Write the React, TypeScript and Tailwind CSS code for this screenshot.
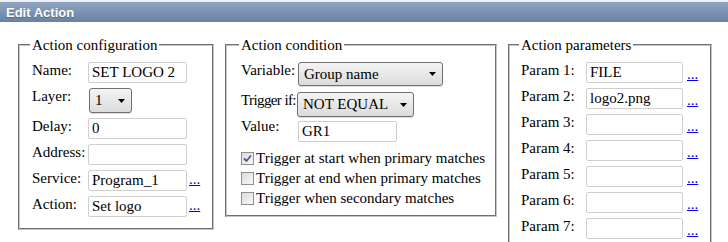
import type { ReactNode } from "react";

/* ── Small form pieces ── */
const TextBox = ({ value = "", width }: { value?: string; width: string }) => (
  <div
    className={`${width} h-[21px] shrink-0 rounded-[2px] border border-[#cfcfcf] bg-white pl-[3px] leading-[19px] whitespace-nowrap overflow-hidden`}
  >
    {value}
  </div>
);

const DropDown = ({ value, width, height }: { value: string; width: string; height: string }) => (
  <div
    className={`${width} ${height} shrink-0 flex items-center justify-between rounded-[3px] border border-[#707070] bg-gradient-to-b from-[#f4f4f4] to-[#dcdcdc] pl-[5px] pr-[6px] shadow-[0_1px_1px_rgba(0,0,0,0.15)]`}
  >
    <span className="whitespace-nowrap">{value}</span>
    <svg width="7" height="4" viewBox="0 0 7 4" className="shrink-0">
      <path d="M0 0 H7 L3.5 4 Z" fill="#000" />
    </svg>
  </div>
);

const Dots = ({ offset }: { offset: string }) => (
  <a className={`${offset} leading-[16px] text-[#0000ee] underline`}>...</a>
);

const Check = ({ checked, label }: { checked?: boolean; label: string }) => (
  <div className="flex items-center h-[20px] leading-[20px]">
    <span className="w-[13px] h-[13px] shrink-0 border border-[#8e8f8f] bg-gradient-to-br from-[#dcdcdc] to-[#f8f8f8] flex items-center justify-center">
      {checked && (
        <svg width="11" height="11" viewBox="0 0 11 11">
          <path d="M2 5.5 L4.5 8 L9 2.5" fill="none" stroke="#4b5a8c" strokeWidth="1.8" />
        </svg>
      )}
    </span>
    <span className="ml-[2px] whitespace-nowrap">{label}</span>
  </div>
);

const Group = ({
  title,
  width,
  pad,
  extra = "",
  children,
}: {
  title: string;
  width: string;
  pad: string;
  extra?: string;
  children: ReactNode;
}) => (
  <fieldset
    className={`${width} ${pad} ${extra} shrink-0 border-2 [--tw-border-style:groove] [border-style:groove] border-[#c4c4c4] pt-[9px]`}
  >
    <legend className="px-[2px] -ml-[2px] leading-[16px]">{title}</legend>
    {children}
  </fieldset>
);

const params = ["FILE", "logo2.png", "", "", "", "", ""];

export default function App() {
  return (
    <div className="w-[728px] h-[242px] overflow-hidden bg-white">
      {/* ── Title bar ── */}
      <div className="h-[22px] border-t-2 border-[#eef1f5] bg-gradient-to-b from-[#8fa4c0] to-[#6882a4] pl-[6px] pt-[3px] font-['Liberation_Sans',Arial,sans-serif] text-[13px] leading-[15px] font-bold text-white [text-shadow:0_1px_1px_rgba(0,0,0,0.25)]">
        Edit Action
      </div>

      <div className="flex items-start pl-[18px] mt-[15px] font-['Liberation_Serif','Times_New_Roman',serif] text-[15px] text-black">
        {/* ── Action configuration ── */}
        <Group title="Action configuration" width="w-[196px]" pad="pl-[12px] pb-[11px]">
          <div className="flex flex-col gap-[5px]">
            <div className="flex items-start">
              <span className="w-[56px] leading-[16px]">Name:</span>
              <TextBox value="SET LOGO 2" width="w-[99px]" />
            </div>
            <div className="flex items-start">
              <span className="w-[57px] leading-[16px]">Layer:</span>
              <DropDown value="1" width="w-[43px]" height="h-[25px]" />
            </div>
            <div className="flex items-start">
              <span className="w-[56px] leading-[16px]">Delay:</span>
              <TextBox value="0" width="w-[99px]" />
            </div>
            <div className="flex items-start">
              <span className="w-[56px] leading-[16px] whitespace-nowrap">Address:</span>
              <TextBox width="w-[99px]" />
            </div>
            <div className="flex items-start">
              <span className="w-[56px] leading-[16px]">Service:</span>
              <TextBox value="Program_1" width="w-[99px]" />
              <Dots offset="ml-[2px] mt-[1px]" />
            </div>
            <div className="flex items-start">
              <span className="w-[56px] leading-[16px]">Action:</span>
              <TextBox value="Set logo" width="w-[99px]" />
              <Dots offset="ml-[2px] mt-[1px]" />
            </div>
          </div>
        </Group>

        {/* ── Action condition ── */}
        <Group title="Action condition" width="w-[272px]" pad="pl-[14px] pb-[7px]" extra="ml-[11px]">
          <div className="flex items-start">
            <span className="w-[57px] leading-[16px]">Variable:</span>
            <DropDown value="Group name" width="w-[145px]" height="h-[24px]" />
          </div>
          <div className="flex items-start mt-[6px]">
            <span className="w-[56px] leading-[16px] whitespace-nowrap tracking-[-0.6px]">Trigger if:</span>
            <DropDown value="NOT EQUAL" width="w-[117px]" height="h-[25px]" />
          </div>
          <div className="flex items-start mt-[1px]">
            <span className="w-[57px] leading-[16px]">Value:</span>
            <div className="mt-[3px]">
              <TextBox value="GR1" width="w-[99px]" />
            </div>
          </div>
          <div className="mt-[6px]">
            <Check checked label="Trigger at start when primary matches" />
            <Check label="Trigger at end when primary matches" />
            <Check label="Trigger when secondary matches" />
          </div>
        </Group>

        {/* ── Action parameters ── */}
        <Group title="Action parameters" width="w-[204px]" pad="pl-[11px] pb-[12px]" extra="ml-[11px]">
          <div className="flex flex-col gap-[5px]">
            {params.map((p, i) => (
              <div key={i} className="flex items-start">
                <span className="w-[65px] leading-[16px]">Param {i + 1}:</span>
                <TextBox value={p} width="w-[97px]" />
                <Dots offset="ml-[4px] mt-[4px]" />
              </div>
            ))}
          </div>
        </Group>
      </div>
    </div>
  );
}
